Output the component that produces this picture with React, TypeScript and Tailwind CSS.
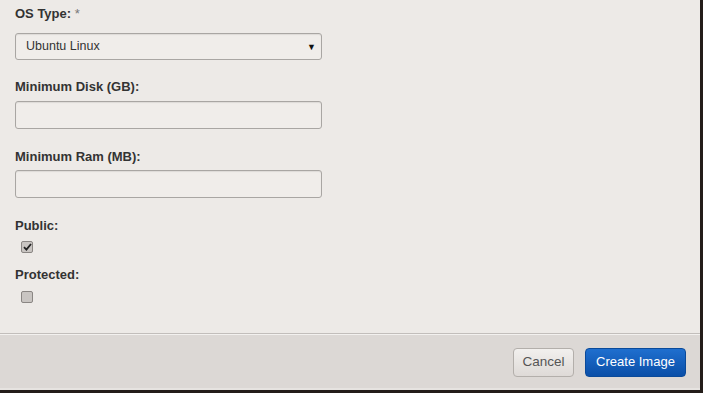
export default function App() {
  return (
    <div className="h-[393px] w-[703px] overflow-hidden bg-[#231d19] font-['Liberation_Sans',Arial,sans-serif]">
      <div className="flex h-[390px] w-[700px] flex-col bg-[#edeae7]">
        <div className="flex flex-1 flex-col px-[15px] pt-[6px]">
          <label className="text-[13px] font-bold leading-[16px] text-[#333]">
            OS Type: <span className="font-normal text-[#777]">*</span>
          </label>
          <div className="relative mt-[11px] flex h-[27px] w-[307px] items-center rounded-[3px] border border-[#a9a6a3] bg-[#f0edea] pl-[10px] text-[12.5px] text-[#333] shadow-[inset_0_1px_1px_rgba(0,0,0,0.08)]">
            Ubuntu Linux
            <span className="absolute right-[5px] top-[7px] text-[9px] text-[#111]">▼</span>
          </div>

          <label className="mt-[19px] text-[13px] font-bold leading-[16px] text-[#333]">
            Minimum Disk (GB):
          </label>
          <div className="mt-[6px] h-[28px] w-[307px] rounded-[3px] border border-[#a9a6a3] bg-[#f0edea] shadow-[inset_0_1px_1px_rgba(0,0,0,0.08)]" />

          <label className="mt-[20px] text-[13px] font-bold leading-[16px] text-[#333]">
            Minimum Ram (MB):
          </label>
          <div className="mt-[5px] h-[28px] w-[307px] rounded-[3px] border border-[#a9a6a3] bg-[#f0edea] shadow-[inset_0_1px_1px_rgba(0,0,0,0.08)]" />

          <label className="mt-[20px] text-[13px] font-bold leading-[16px] text-[#333]">
            Public:
          </label>
          <div className="ml-[6px] mt-[7px] flex h-[12px] w-[12px] items-center justify-center rounded-[2px] border border-[#8a8683] bg-[#c9c5c2]">
            <svg width="9" height="8" viewBox="0 0 9 8">
              <path d="M1 4.2 L3.4 6.6 L8 1" fill="none" stroke="#222" strokeWidth="1.8" />
            </svg>
          </div>

          <label className="mt-[14px] text-[13px] font-bold leading-[16px] text-[#333]">
            Protected:
          </label>
          <div className="ml-[6px] mt-[8px] h-[12px] w-[12px] rounded-[2px] border border-[#8a8683] bg-[#c9c5c2]" />
        </div>

        <div className="flex h-[57px] items-center justify-end gap-[11px] border-t border-[#c2bebb] bg-[#dcd8d5] pr-[14px] shadow-[inset_0_1px_0_#f3f1ef,inset_0_-2px_0_#e6e3e0]">
          <button className="h-[29px] w-[61px] rounded-[4px] border border-[#b3afab] bg-gradient-to-b from-[#f2f0ee] to-[#dedad7] text-[13.5px] text-[#555]">
            Cancel
          </button>
          <button className="h-[29px] w-[101px] rounded-[4px] border border-[#0a4a9a] bg-gradient-to-b from-[#1f6fcf] to-[#0a4fa8] text-[13px] text-white">
            Create Image
          </button>
        </div>
      </div>
    </div>
  );
}
